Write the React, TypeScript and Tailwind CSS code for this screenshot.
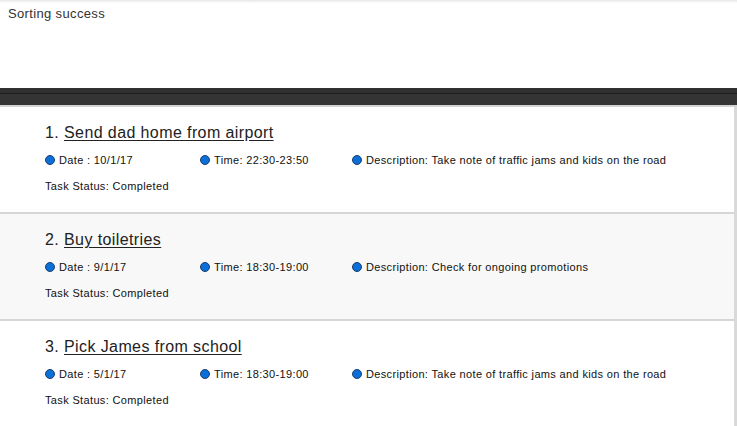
const tasks = [
  {
    title: "Send dad home from airport",
    date: "10/1/17",
    time: "22:30-23:50",
    description: "Take note of traffic jams and kids on the road",
    status: "Completed",
  },
  {
    title: "Buy toiletries",
    date: "9/1/17",
    time: "18:30-19:00",
    description: "Check for ongoing promotions",
    status: "Completed",
  },
  {
    title: "Pick James from school",
    date: "5/1/17",
    time: "18:30-19:00",
    description: "Take note of traffic jams and kids on the road",
    status: "Completed",
  },
];

function Bullet({ children }: { children: React.ReactNode }) {
  return (
    <span className="flex items-center gap-[4px]">
      <span className="h-[10px] w-[10px] shrink-0 rounded-full border border-[#1d3f6e] bg-[#0b6fd8]" />
      <span>{children}</span>
    </span>
  );
}

export default function App() {
  return (
    <div className="min-h-screen bg-white font-['Liberation_Sans',Arial,sans-serif] text-[#222]">
      <div className="h-[3px] bg-gradient-to-b from-[#e6e6e6] to-white" />
      <div className="h-[85px] px-2 pt-[3px] text-[13px] leading-[16px] tracking-[0.35px] text-[#333]">Sorting success</div>

      <div className="h-[5px] bg-[#313131]" />
      <div className="h-px bg-[#1e1e1e]" />
      <div className="h-[11px] bg-[#343434]" />
      <div className="h-[2px] bg-[#d3d3d3]" />

      <ul className="border-r-[3px] border-[#d9d9d9]">
        {tasks.map((task, i) => (
          <li
            key={task.title}
            className={`pl-[45px] pt-[16px] pb-[19px] ${i % 2 === 1 ? "bg-[#f8f8f8]" : "bg-white"} ${
              i < tasks.length - 1 ? "border-b-2 border-[#d6d6d6]" : ""
            }`}
          >
            <h2 className="text-[16px] leading-[20px] tracking-[0.4px] text-[#222]">
              {i + 1}. <a href="#" className="underline underline-offset-2">{task.title}</a>
            </h2>
            <div className="mt-[10px] flex text-[11px] leading-[14px] tracking-[0.35px] text-[#111]">
              <div className="w-[155px]">
                <Bullet>Date : {task.date}</Bullet>
              </div>
              <div className="w-[152px]">
                <Bullet>Time: {task.time}</Bullet>
              </div>
              <div>
                <Bullet>Description: {task.description}</Bullet>
              </div>
            </div>
            <p className="mt-[12px] text-[11px] leading-[14px] tracking-[0.35px] text-[#111]">Task Status: {task.status}</p>
          </li>
        ))}
      </ul>
    </div>
  );
}
